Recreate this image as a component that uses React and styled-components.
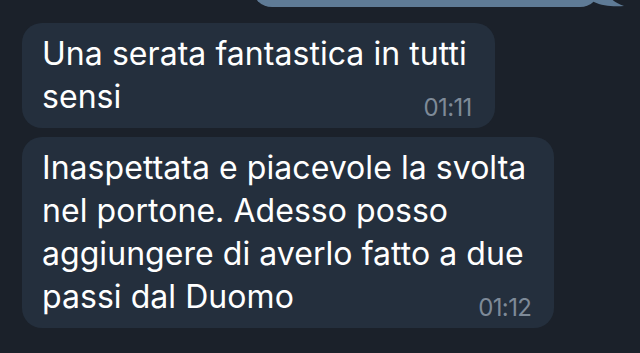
import styled, { createGlobalStyle } from "styled-components";

const GlobalStyle = createGlobalStyle`
    html, body {
        margin: 0;
        padding: 0;
        background: #1b212a;
        overflow: hidden;
    }
`;

const messages = [
    {
        lines: ["Una serata fantastica in tutti", "sensi"],
        time: "01:11",
    },
    {
        lines: [
            "Inaspettata e piacevole la svolta",
            "nel portone. Adesso posso",
            "aggiungere di averlo fatto a due",
            "passi dal Duomo",
        ],
        time: "01:12",
    },
];

export default function App() {
    return (
        <>
            <GlobalStyle />
            <Chat>
                <OutRow>
                    <OutBubble>
                        <Tail width="34" height="22" viewBox="0 0 34 22">
                            <path d="M0 0 H10 C12 10 18 17 30 21 C20 22 8 21 0 17 Z" fill="#5f7b96" />
                        </Tail>
                    </OutBubble>
                </OutRow>
                <List>
                    {messages.map((m) => (
                        <Bubble key={m.time}>
                            {m.lines.slice(0, -1).map((l) => (
                                <Line key={l}>{l}</Line>
                            ))}
                            <LastLine>
                                <span>{m.lines[m.lines.length - 1]}</span>
                                <Time>{m.time}</Time>
                            </LastLine>
                        </Bubble>
                    ))}
                </List>
            </Chat>
        </>
    );
}

const Chat = styled.div`
    width: 640px;
    height: 353px;
    display: flex;
    flex-direction: column;
    font-family: Inter, Roboto, "Liberation Sans", sans-serif;
`;

const OutRow = styled.div`
    display: flex;
    justify-content: flex-end;
    padding-right: 40px;
    margin-top: -40px;
`;

const OutBubble = styled.div`
    position: relative;
    width: 348px;
    height: 47px;
    background: #5f7b96;
    border-radius: 20px;
`;

const Tail = styled.svg`
    position: absolute;
    right: -28px;
    bottom: 0;
`;

const List = styled.div`
    display: flex;
    flex-direction: column;
    align-items: flex-start;
    gap: 9px;
    padding: 16px 0 0 22px;
`;

const Bubble = styled.div`
    background: #242f3d;
    border-radius: 20px;
    padding: 9px 23px 10px 20px;
    color: #ffffff;
    font-size: 32px;
    line-height: 43px;
    letter-spacing: 0.05px;
`;

const Line = styled.div`
    padding-right: 5px;
    white-space: nowrap;
`;

const LastLine = styled.div`
    display: flex;
    justify-content: space-between;
    align-items: flex-end;
    gap: 20px;
    white-space: nowrap;
`;

const Time = styled.span`
    font-size: 24px;
    line-height: 24px;
    letter-spacing: -0.6px;
    color: #7e8a98;
    margin-bottom: -2px;
`;
